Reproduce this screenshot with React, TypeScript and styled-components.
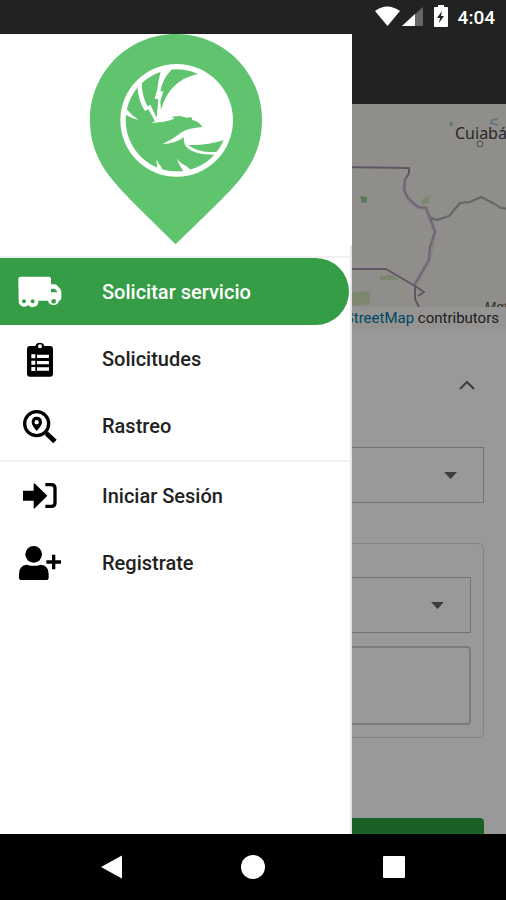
import React from "react";
import styled, { createGlobalStyle } from "styled-components";

const GlobalStyle = createGlobalStyle`
  *, *::before, *::after { box-sizing: border-box; }
  body { margin: 0; background: #000; font-family: Roboto, "Liberation Sans", sans-serif; }
  button, select, textarea { font: inherit; }
`;

const Screen = styled.div`
  display: flex;
  flex-direction: column;
  height: 100vh;
  overflow: hidden;
`;

const StatusBar = styled.header`
  display: flex;
  flex: none;
  align-items: center;
  justify-content: flex-end;
  height: 34px;
  padding: 0 11px;
  background: #222;
  color: #fff;
`;

const StatusIcons = styled.svg`
  width: 76px;
  height: 24px;
  margin-right: 8px;
`;

const Clock = styled.time`
  padding-top: 2px;
  font-size: 19px;
  font-weight: 500;
  line-height: 24px;
`;

const Stage = styled.div`
  position: relative;
  flex: 1;
  min-height: 0;
  overflow: hidden;
  background: #fff;
`;

const AppBar = styled.div`
  height: 70px;
  background: #3a3a3a;
`;

const MapDrawing = styled.svg`
  display: block;
  width: 100%;
  height: 203px;
  background: #f0ede7;
`;

const Attribution = styled.p`
  height: 22px;
  margin: 0;
  padding: 0 7px;
  background: #f8f7f5;
  color: #333;
  font-size: 15px;
  line-height: 22px;
  text-align: right;

  a { color: #0078a8; text-decoration: none; }
`;

const RequestForm = styled.form`
  display: flex;
  flex-direction: column;
  padding: 32px 22px;
`;

const SectionToggle = styled.button`
  display: flex;
  align-items: center;
  justify-content: flex-end;
  height: 48px;
  margin-bottom: 38px;
  padding: 0 8px;
  border: 0;
  background: none;
`;

const SelectWrap = styled.div`
  position: relative;
`;

const SelectBox = styled.select`
  display: block;
  width: 100%;
  height: 56px;
  padding: 0 48px 0 14px;
  border: 1px solid #c0c0c0;
  border-radius: 0;
  background: transparent;
  appearance: none;
`;

const SelectArrow = styled.svg`
  position: absolute;
  top: 25px;
  right: 27px;
  width: 13px;
  height: 7px;
  pointer-events: none;
`;

const Group = styled.fieldset`
  display: flex;
  flex-direction: column;
  gap: 13px;
  min-width: 0;
  margin: 40px 0 80px;
  padding: 33px 12px 12px;
  border: 1px solid #dedede;
  border-radius: 5px;
`;

const Notes = styled.textarea`
  display: block;
  width: 100%;
  height: 79px;
  border: 2px solid #cecece;
  border-radius: 4px;
  background: transparent;
  resize: none;
`;

const SubmitButton = styled.button`
  height: 48px;
  border: 0;
  border-radius: 4px;
  background: #2da23f;
  color: #fff;
`;

const Scrim = styled.div`
  position: absolute;
  inset: 0;
  background: rgba(0, 0, 0, 0.4);
`;

const Drawer = styled.aside`
  position: absolute;
  inset: 0 auto 0 0;
  display: flex;
  flex-direction: column;
  width: 352px;
  max-width: 85%;
  background: #fff;
`;

const Brand = styled.div`
  display: flex;
  justify-content: center;
  height: 211px;
`;

const Pin = styled.svg`
  width: 172px;
  height: 211px;
`;

const Menu = styled.nav`
  flex: 1;
  padding-top: 11px;
  border-right: 2px solid #e4e4e4;
`;

const MenuList = styled.ul`
  margin: 0;
  padding: 0 1px 1px 0;
  border-top: 2px solid #f0f0f0;
  list-style: none;
`;

const MenuLink = styled.a<{ $active?: boolean }>`
  display: flex;
  align-items: center;
  gap: 40px;
  height: 67px;
  padding-left: 18px;
  border-radius: 0 34px 34px 0;
  background: ${(p) => (p.$active ? "#349d45" : "transparent")};
  color: ${(p) => (p.$active ? "#fff" : "#222")};
  font-size: 20px;
  font-weight: 500;
  line-height: 24px;
  text-decoration: none;
`;

const MenuIcon = styled.svg`
  flex: none;
  width: 44px;
  height: 36px;
  fill: ${(p) => p.fill ?? "#000"};
`;

const SystemBar = styled.footer`
  display: grid;
  flex: none;
  grid-template-columns: repeat(3, 1fr);
  height: 66px;
  padding: 0 42px;
  background: #000;
`;

const SystemButton = styled.button`
  display: flex;
  align-items: center;
  justify-content: center;
  padding: 0;
  border: 0;
  background: none;

  svg { width: 24px; height: 24px; fill: #fff; }
`;

const TruckIcon = () => (
  <MenuIcon viewBox="54 101 132 108" fill="#fff">
    <path
      fillRule="evenodd"
      d="M61 109H147Q153 109 153 115V132H164Q169 132 173 137L181 146Q184 150 184 156V174Q184 181 177 181A17 17 0 0 1 144 181H115A17 17 0 0 1 85 194A17 17 0 0 1 56 181L55 115Q55 109 61 109ZM153 145V156H172Q171 151 168 149L163 145ZM72 177A6 6 0 1 0 72 189A6 6 0 1 0 72 177ZM98 177A6 6 0 1 0 98 189A6 6 0 1 0 98 177ZM161 176A7 7 0 1 0 161 190A7 7 0 1 0 161 176Z"
    />
  </MenuIcon>
);

const ClipboardIcon = () => (
  <MenuIcon viewBox="54 302 132 108">
    <path
      fillRule="evenodd"
      d="M90 317H106A14 13 0 0 1 133 317H150Q159 317 159 326V400Q159 409 150 409H90Q81 409 81 400V326Q81 317 90 317ZM120 312A6 6 0 1 0 120 324A6 6 0 1 0 120 312ZM94 342V354H106V342ZM111 343V353H147V343ZM94 361V373H106V361ZM111 362V372H147V362ZM94 380V392H106V380ZM111 381V391H147V381Z"
    />
  </MenuIcon>
);

const TrackIcon = () => (
  <MenuIcon viewBox="54 54 132 108">
    <circle cx="110" cy="101" r="36" fill="none" stroke="#000" strokeWidth="10" />
    <path d="M136 129L142 123L170 149L160 160L136 137Z" />
    <path
      fillRule="evenodd"
      d="M110 80Q126 80 126 97Q126 106 110 123Q95 106 95 97Q95 80 110 80ZM110 90A6 6 0 1 0 110 103A6 6 0 1 0 110 90Z"
    />
  </MenuIcon>
);

const LoginIcon = () => (
  <MenuIcon viewBox="54 264 132 108">
    <path d="M69 302H101V281Q102 279 105 281L142 317L105 354Q102 357 101 354V332H69Z" />
    <path
      d="M136 284H154Q165 284 165 295V338Q165 349 154 349H136"
      fill="none"
      stroke="#000"
      strokeWidth="10"
    />
  </MenuIcon>
);

const RegisterIcon = () => (
  <MenuIcon viewBox="54 465 132 108">
    <circle cx="101" cy="493" r="25" />
    <path d="M81 524Q101 531 122 524Q146 526 146 552V563Q146 570 138 570H65Q57 570 57 563V552Q57 526 81 524Z" />
    <path d="M156 494H166V511H183V521H166V538H156V521H139V511H156Z" />
  </MenuIcon>
);

const PinLogo = () => (
  <Pin viewBox="30 12 516 633" role="img" aria-label="Logo">
    <defs>
      <clipPath id="emblem">
        <circle cx="290" cy="271" r="153" />
      </clipPath>
    </defs>
    <path
      fill="#60c36e"
      d="M288 12C145 12 30 127 30 270C30 345 58 399 93 444C133 495 204 560 287 643C371 560 443 495 483 444C518 399 546 345 546 270C546 127 431 12 288 12Z"
    />
    <circle cx="290" cy="271" r="169" fill="#fff" />
    <g clipPath="url(#emblem)" fill="#60c36e">
      <path d="M125 220L140 238Q157 259 176 270Q155 266 140 256L120 250V440H235L229 387Q236 404 246 413V440H325Q300 417 290 385Q300 400 322 410L350 440L403 374Q350 375 326 357Q309 344 312 322Q284 342 248 342Q280 327 305 307Q325 294 367 291Q358 275 337 270L334 261L320 263L300 258L276 260L283 266Q255 277 213 279L225 274L205 238L195 243Q174 211 173 174L150 160Z" />
      <path d="M184 146L245 115Q233 157 233 174L224 206L235 208L230 263L211 224L203 229Q188 204 186 171Z" />
      <path d="M271 115H335L353 132Q267 151 243 240L241 214L250 184L241 184Q249 145 273 121Z" />
      <path d="M325 345Q382 347 432 330L440 345L408 366Q354 369 325 345Z" />
    </g>
  </Pin>
);

const RegionMap = () => (
  <MapDrawing viewBox="0 104 506 203" preserveAspectRatio="xMaxYMin slice" aria-hidden="true">
    <g fill="#c5dda5" opacity=".7">
      <path d="M352 292L370 291L370 304L352 306Z" />
      <path d="M380 276L394 275L398 280L380 280Z" />
      <path d="M421 200L430 195L429 203L422 205Z" />
    </g>
    <path fill="#98c896" d="M360 196L367 197L367 202L362 203Z" />
    <path fill="#a3c8a7" d="M449 123L452 121L453 125L451 127Z" />
    <path fill="none" stroke="#a5cdd0" strokeWidth="2" d="M498 119L492 120L491 123L498 125" />
    <g fill="none" strokeLinejoin="round">
      <path
        stroke="#9d92a6"
        strokeWidth="2"
        d="M340 167L409 168L409 173L405 180L404 190L408 198L418 207L426 208L430 218L435 232L430 247L429 260L415 284L415 299L419 307M340 269L386 269L415 286L424 292L418 296"
      />
      <path stroke="#d1c6d8" strokeWidth="4" opacity=".5" d="M405 178L404 190L410 202L420 208L426 208L435 232L429 260L415 285" />
      <path stroke="#aaa5b0" strokeWidth="2" d="M431 218L437 220L449 216L460 203L470 202L481 197L493 203L501 208L512 209" />
      <circle cx="480" cy="144" r="3" stroke="#777" />
    </g>
    <text x="455" y="139" fontFamily="'Noto Sans', sans-serif" fontSize="16" fill="#444">Cuiabá</text>
    <text x="484" y="312" fontFamily="'Noto Sans', sans-serif" fontStyle="italic" fontSize="14" fill="#555">Mato</text>
  </MapDrawing>
);

const Dropdown = ({ label }: { label: string }) => (
  <SelectWrap>
    <SelectBox aria-label={label} defaultValue="">
      <option value="" />
    </SelectBox>
    <SelectArrow viewBox="0 0 13 7" fill="#666">
      <path d="M0 0H13L6.5 7Z" />
    </SelectArrow>
  </SelectWrap>
);

export default function App() {
  return (
    <>
      <GlobalStyle />
      <Screen>
        <StatusBar>
          <StatusIcons viewBox="373 6 76 24" aria-hidden="true">
            <path fill="#fff" d="M374 12Q386 3 399 12L386.500 27Z" />
            <path fill="#666" d="M401 27L422 8V27Z" />
            <path fill="#fff" d="M401 27L414 15V27Z" />
            <path
              fill="#fff"
              fillRule="evenodd"
              d="M437 8V6H443V8H446Q447 8 447 9V27Q447 28 446 28H434Q433 28 433 27V9Q433 8 434 8ZM441 12L436 19H439L438 24L443 17H440Z"
            />
          </StatusIcons>
          <Clock>4:04</Clock>
        </StatusBar>

        <Stage>
          <main>
            <AppBar />
            <RegionMap />
            <Attribution>
              © <a href="#mapa">OpenStreetMap</a> contributors
            </Attribution>
            <RequestForm>
              <SectionToggle type="button" aria-label="Contraer">
                <svg width="18" height="18" viewBox="0 0 18 18" fill="none" stroke="#666" strokeWidth="2">
                  <path d="M2 13L9 6L16 13" />
                </svg>
              </SectionToggle>
              <Dropdown label="Servicio" />
              <Group>
                <Dropdown label="Tipo" />
                <Notes aria-label="Detalle" />
              </Group>
              <SubmitButton type="button" aria-label="Solicitar" />
            </RequestForm>
          </main>
          <Scrim />
          <Drawer>
            <Brand>
              <PinLogo />
            </Brand>
            <Menu>
              <MenuList>
                <li><MenuLink href="#servicio" $active><TruckIcon />Solicitar servicio</MenuLink></li>
                <li><MenuLink href="#solicitudes"><ClipboardIcon />Solicitudes</MenuLink></li>
                <li><MenuLink href="#rastreo"><TrackIcon />Rastreo</MenuLink></li>
              </MenuList>
              <MenuList>
                <li><MenuLink href="#sesion"><LoginIcon />Iniciar Sesión</MenuLink></li>
                <li><MenuLink href="#registro"><RegisterIcon />Registrate</MenuLink></li>
              </MenuList>
            </Menu>
          </Drawer>
        </Stage>

        <SystemBar>
          <SystemButton aria-label="Atrás">
            <svg viewBox="0 0 24 24"><path d="M1 12L21 1Q22 0 22 1V23Q22 24 21 23Z" /></svg>
          </SystemButton>
          <SystemButton aria-label="Inicio">
            <svg viewBox="0 0 24 24"><circle cx="12" cy="12" r="12" /></svg>
          </SystemButton>
          <SystemButton aria-label="Recientes">
            <svg viewBox="0 0 24 24"><rect x="1" y="1" width="22" height="22" rx="1" /></svg>
          </SystemButton>
        </SystemBar>
      </Screen>
    </>
  );
}
